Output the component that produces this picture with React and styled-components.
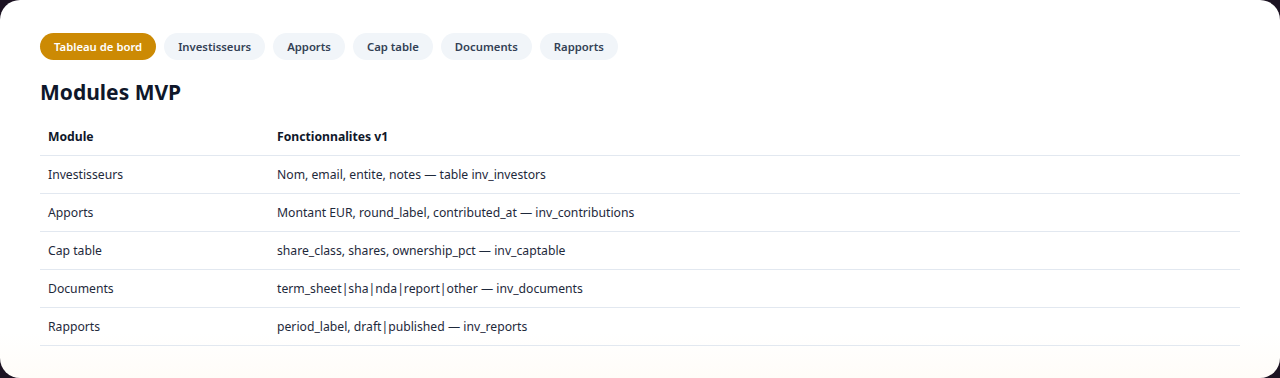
import React from "react";
import styled, { createGlobalStyle } from "styled-components";

const Global = createGlobalStyle`
  html, body { margin: 0; padding: 0; background: #1c1322; }
  body { font-family: "Noto Sans", "Open Sans", sans-serif; }
  * { box-sizing: border-box; }
`;

const Card = styled.div`
  height: 378px;
  border-radius: 20px;
  background: linear-gradient(to bottom, #ffffff 0%, #ffffff 88%, #fffcf8 100%);
  padding: 33px 40px 0 40px;
  overflow: hidden;
`;

const Tabs = styled.nav`
  display: flex;
  gap: 8px;
`;

const Tab = styled.button`
  border: none;
  border-radius: 999px;
  padding: 0 14px;
  height: 27px;
  font-family: inherit;
  font-size: 11.3px;
  font-weight: 600;
  cursor: pointer;
  background: ${(p) => (p.$active ? "#cc8a04" : "#f1f5f9")};
  color: ${(p) => (p.$active ? "#ffffff" : "#334155")};
`;

const Title = styled.h2`
  margin: 18px 0 0 0;
  font-size: 21px;
  line-height: 28px;
  font-weight: 700;
  color: #0f172a;
`;

const Table = styled.table`
  width: 100%;
  margin-top: 12px;
  border-collapse: collapse;
  font-size: 12.2px;
  color: #1e293b;
`;

const Th = styled.th`
  text-align: left;
  font-weight: 700;
  color: #0f172a;
  padding: 10px 8px;
  line-height: 17px;
  border-bottom: 1px solid #e2e8f0;
  width: ${(p) => p.$w || "auto"};
`;

const Td = styled.td`
  padding: 10px 8px;
  line-height: 17px;
  border-bottom: 1px solid #e2e8f0;
`;

const tabs = ["Tableau de bord", "Investisseurs", "Apports", "Cap table", "Documents", "Rapports"];

const rows = [
  ["Investisseurs", "Nom, email, entite, notes — table inv_investors"],
  ["Apports", "Montant EUR, round_label, contributed_at — inv_contributions"],
  ["Cap table", "share_class, shares, ownership_pct — inv_captable"],
  ["Documents", "term_sheet|sha|nda|report|other — inv_documents"],
  ["Rapports", "period_label, draft|published — inv_reports"],
];

export default function App() {
  return (
    <>
      <Global />
      <Card>
        <Tabs>
          {tabs.map((t, i) => (
            <Tab key={t} $active={i === 0}>{t}</Tab>
          ))}
        </Tabs>
        <Title>Modules MVP</Title>
        <Table>
          <thead>
            <tr>
              <Th $w="229px">Module</Th>
              <Th>Fonctionnalites v1</Th>
            </tr>
          </thead>
          <tbody>
            {rows.map(([m, f]) => (
              <tr key={m}>
                <Td>{m}</Td>
                <Td>{f}</Td>
              </tr>
            ))}
          </tbody>
        </Table>
      </Card>
    </>
  );
}
